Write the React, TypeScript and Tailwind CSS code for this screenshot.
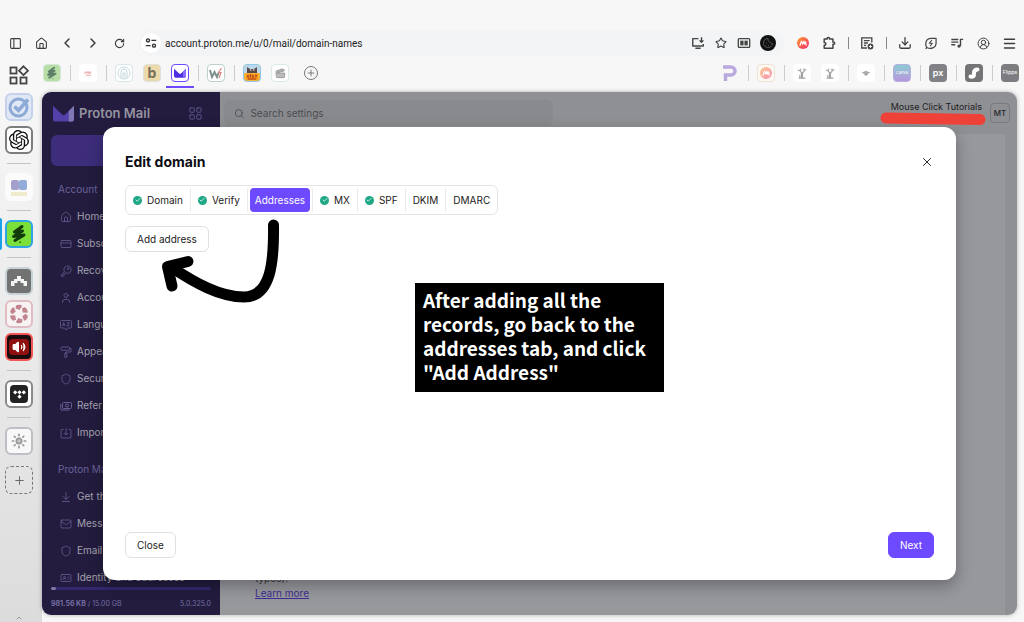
import React from 'react';
import {
  ArrowDownToLine, ArrowLeft, Check, ChevronLeft, ChevronRight, ChevronUp, CircleUserRound, Clapperboard, CreditCard,
  Download, House, IdCard, LayoutGrid, Mail, Menu, PanelLeft, Plus, RotateCw, Search, Shield, Star, Sun, User, Volume2, X,
} from 'lucide-react';
import { SiOpenai, SiTidal } from 'react-icons/si';

type NavItem = {
  label: string;
  icon: React.ReactNode;
};

type Tab = {
  label: string;
  done?: boolean;
  active?: boolean;
};

const line = { size: 12, strokeWidth: 1.6 };

const accountItems: NavItem[] = [
  { label: 'Home', icon: <House {...line} /> },
  { label: 'Subscription', icon: <CreditCard {...line} /> },
  { label: 'Recovery', icon: <KeyIcon /> },
  { label: 'Account and password', icon: <User {...line} /> },
  { label: 'Language and time', icon: <LanguageIcon /> },
  { label: 'Appearance', icon: <RollerIcon /> },
  { label: 'Security and privacy', icon: <Shield {...line} /> },
  { label: 'Refer a friend', icon: <MoneyIcon /> },
  { label: 'Import via Easy Switch', icon: <ImportIcon /> },
];

const mailItems: NavItem[] = [
  { label: 'Get the apps', icon: <ArrowDownToLine {...line} /> },
  { label: 'Messages and composing', icon: <Mail {...line} /> },
  { label: 'Email privacy', icon: <Shield {...line} /> },
  { label: 'Identity and addresses', icon: <IdCard {...line} /> },
];

const tabs: Tab[] = [
  { label: 'Domain', done: true },
  { label: 'Verify', done: true },
  { label: 'Addresses', active: true },
  { label: 'MX', done: true },
  { label: 'SPF', done: true },
  { label: 'DKIM' },
  { label: 'DMARC' },
];

function KeyIcon() {
  return (
    <svg viewBox="0 0 24 24" className="h-3 w-3" fill="none" stroke="currentColor" strokeWidth="1.6" strokeLinejoin="round">
      <path d="M9 13.500 2.500 20v2.500H6.500v-3h3V17l1.500-1.500a7.300 7.300 0 1 0-2-2Z" />
      <circle cx="16.500" cy="7.500" r="1.500" />
    </svg>
  );
}

function LanguageIcon() {
  return (
    <svg viewBox="0 0 24 24" className="h-3 w-3" fill="none" stroke="currentColor" strokeWidth="1.6" strokeLinejoin="round">
      <path d="M3 3h18a2 2 0 0 1 2 2v11a2 2 0 0 1-2 2h-6l-3 4-3-4H3a2 2 0 0 1-2-2V5a2 2 0 0 1 2-2Z" />
      <path d="M5 14l2.500-7L10 14M6 12h3M13.500 7.500H19l-5.500 6H19" />
    </svg>
  );
}

function RollerIcon() {
  return (
    <svg viewBox="0 0 24 24" className="h-3 w-3" fill="none" stroke="currentColor" strokeWidth="1.6" strokeLinejoin="round">
      <rect x="2" y="2" width="17" height="6.500" rx="1.500" />
      <path d="M19 5h3v7H11.500v3M9.500 15h4v7.500h-4Z" />
    </svg>
  );
}

function MoneyIcon() {
  return (
    <svg viewBox="0 0 24 24" className="h-3 w-3" fill="none" stroke="currentColor" strokeWidth="2" strokeLinejoin="round">
      <rect x="5" y="5" width="18" height="12" rx="2" />
      <circle cx="14" cy="11" r="3" />
      <path d="M1.500 8v10a2 2 0 0 0 2 2H19" />
    </svg>
  );
}

function ImportIcon() {
  return (
    <svg viewBox="0 0 24 24" className="h-3 w-3" fill="none" stroke="currentColor" strokeWidth="1.6" strokeLinejoin="round">
      <path d="M7 5H4a2 2 0 0 0-2 2v13a2 2 0 0 0 2 2h16a2 2 0 0 0 2-2V7a2 2 0 0 0-2-2h-3M12 2v14M8 12l4 4 4-4" />
    </svg>
  );
}

function SiteIcon() {
  return (
    <svg viewBox="0 0 16 16" className="h-3 w-3" fill="none" stroke="#333" strokeWidth="1.8">
      <circle cx="4" cy="4.500" r="2" />
      <path d="M8.500 4.500H15M1 11.500h6.500" />
      <circle cx="12" cy="11.500" r="2" />
    </svg>
  );
}

function BoardIcon() {
  return (
    <svg viewBox="0 0 20 20" className="h-5 w-5" fill="none" stroke="#444" strokeWidth="1.8">
      <rect x="1.500" y="2.500" width="6" height="6" />
      <path d="M14.500 1.300 19 5.700l-4.500 4.400L10 5.700Z" />
      <rect x="1.500" y="12.500" width="6" height="6" />
      <rect x="11.500" y="12.500" width="6" height="6" />
    </svg>
  );
}

function InstallIcon() {
  return (
    <svg viewBox="0 0 16 16" className="h-3.5 w-3.5" fill="none" stroke="#444" strokeWidth="1.6" strokeLinejoin="round">
      <path d="M8.500 3H2v8.500h12V9M5 14h6" />
      <path d="M12 1.500v5.500M9.800 5 12 7.200 14.200 5" />
    </svg>
  );
}

function PuzzleIcon() {
  return (
    <svg viewBox="0 0 16 16" className="h-3.5 w-3.5" fill="none" stroke="#444" strokeWidth="1.7" strokeLinejoin="round">
      <path d="M2.500 3.500H6C5.300 1 9.200 1 8.500 3.500h4V7c2.600-.6 2.600 3.100 0 2.500v4.500h-10v-3.500c2.500.3 2.500-3.300 0-3Z" />
    </svg>
  );
}

function QueueIcon() {
  return (
    <svg viewBox="0 0 16 16" className="h-3.5 w-3.5" fill="none" stroke="#444" strokeWidth="1.6">
      <path d="M1.500 4h8M1.500 7h8M1.500 10h4.500M12 11.500V3.800h3" />
      <circle cx="10.300" cy="11.500" r="1.900" fill="#444" stroke="none" />
    </svg>
  );
}

function ReaderIcon() {
  return (
    <svg viewBox="0 0 16 16" className="h-3.5 w-3.5">
      <rect x="1.500" y="3" width="13" height="10" rx="1" fill="none" stroke="#444" strokeWidth="1.500" />
      <rect x="3.700" y="5.300" width="3.800" height="5.400" fill="#444" />
      <rect x="8.500" y="5.300" width="3.800" height="5.400" fill="#444" />
    </svg>
  );
}

function NoteIcon() {
  return (
    <svg viewBox="0 0 16 16" className="h-3.5 w-3.5" fill="none" stroke="#444" strokeWidth="1.500">
      <path d="M13.500 7.500V2.200H2v11.500h6M4.500 5.200h6.500M4.500 8h4.500M4.500 10.800h2.500" />
      <circle cx="12" cy="12" r="3.300" fill="#444" stroke="none" />
      <path d="M12 10.200v3.600M10.200 12h3.600" stroke="#fff" strokeWidth="1" />
    </svg>
  );
}

function EnergyIcon() {
  return (
    <svg viewBox="0 0 16 16" className="h-3.5 w-3.5" fill="none" stroke="#444" strokeWidth="1.400" strokeLinejoin="round">
      <path d="M3.300 13.200C.5 9 2.200 2.600 8 2.600h5.800V8c0 5.800-6.400 7.500-10.500 5.200Zm0 0L1.800 14.500" />
      <path d="M9 4.800 6 8.300h3.500L7 11.500" strokeWidth="1.200" />
    </svg>
  );
}

function CookieIcon() {
  return (
    <svg viewBox="0 0 16 16" className="h-4 w-4">
      <circle cx="8" cy="8" r="8" fill="#111" />
      <path d="M8 3.500a4.500 4.500 0 1 0 4.500 5c-1.200.3-2-.3-2-1.400-1.500.2-2.800-1.400-2.500-3.600Z" fill="none" stroke="#555" />
      <path d="M6 8h.6M8 10.500h.6M5.800 10.500h.4" stroke="#777" />
    </svg>
  );
}

function PeakIcon({ className }: { className: string }) {
  return (
    <svg viewBox="0 0 16 16" className={className}>
      <circle cx="8" cy="8" r="8" fill="url(#peak)" />
      <path d="m4 11 2-5.500 1.600 4L9.200 5.500l1 4 1.200-3 .8 4.500" fill="none" stroke="#fff" strokeWidth="1.600" strokeLinejoin="round" strokeLinecap="round" />
      <defs>
        <linearGradient id="peak" x1="0" y1="0" x2="1" y2="1">
          <stop offset="0" stopColor="#ff9d2e" />
          <stop offset="1" stopColor="#f5276f" />
        </linearGradient>
      </defs>
    </svg>
  );
}

function ScribbleIcon({ className }: { className: string }) {
  return (
    <svg viewBox="0 0 20 20" className={className} fill="none" stroke="currentColor" strokeWidth="3" strokeLinecap="round" strokeLinejoin="round">
      <path d="M13 2.500 5.500 8l8-1-9 5.500 10.500-1.500-9 5.500" />
      <path d="M11 18.200h.2" strokeWidth="1.500" />
    </svg>
  );
}

function MailLogo({ className, light = '#a79bea', deep = '#5b43c4' }: { className: string; light?: string; deep?: string }) {
  return (
    <svg viewBox="0 0 22 17" className={className}>
      <path d="M0 0.500 9.500 9.500a2.500 2.500 0 0 0 3.300 0L22 .5V14a3 3 0 0 1-3 3H3a3 3 0 0 1-3-3Z" fill={deep} />
      <path d="M16.500 6 22 .5V14a3 3 0 0 1-3 3h-2.500Z" fill={light} />
    </svg>
  );
}

function PlantIcon() {
  return (
    <svg viewBox="0 0 14 14" className="h-3 w-3" fill="none" stroke="#a2a2a2" strokeWidth="1.300">
      <path d="M7 13V7L4 4M7 8l3-4M4.500 13V9M4 4 2 3.500M10 4l2-1M5 2l1 2M9.500 1.500 9 4M3 13h8" />
      <path d="M7 13V7" strokeWidth="2.500" />
    </svg>
  );
}

function ApertureIcon() {
  return (
    <svg viewBox="0 0 20 20" className="h-5 w-5" fill="#c1858f">
      {[0, 60, 120, 180, 240, 300].map((angle) => (
        <path key={angle} d="M7 1.500c2.500-1.300 5-.8 6.200.5L10.500 6 6.500 4.500Z" transform={`rotate(${angle} 10 10)`} />
      ))}
    </svg>
  );
}

function ToolButton({ label, children }: { label: string; children: React.ReactNode }) {
  return (
    <button aria-label={label} className="flex h-[26px] w-[26px] shrink-0 items-center justify-center text-[#3d3d3d]">
      {children}
    </button>
  );
}

function ToolDivider() {
  return (
    <div className="flex w-3 shrink-0 justify-center">
      <div className="h-3 w-px bg-[#888]" />
    </div>
  );
}

function TabDivider() {
  return (
    <div className="flex h-[26px] w-2 shrink-0 items-center justify-center">
      <div className="h-4 w-px bg-[#ccc]" />
    </div>
  );
}

function Pinned({ label, tile, active, children }: { label: string; tile: string; active?: boolean; children?: React.ReactNode }) {
  return (
    <button aria-label={label} className={`flex h-[28px] w-7 shrink-0 justify-center border-b-2 pt-1 ${active ? 'border-[#6d4aff]' : 'border-transparent'}`}>
      <span className={`flex h-[18px] w-[18px] items-center justify-center overflow-hidden rounded ${tile}`}>{children}</span>
    </button>
  );
}

function RailTile({ label, tile, children }: { label: string; tile: string; children?: React.ReactNode }) {
  return (
    <button aria-label={label} className={`flex h-7 w-7 shrink-0 items-center justify-center rounded-md border-2 ${tile}`}>
      {children}
    </button>
  );
}

function RailDivider() {
  return <div className="my-1 h-px w-6 shrink-0 bg-[#c4c4c4]" />;
}

function BrowserBar() {
  return (
    <div className="flex items-center px-0.5">
      <div className="flex w-[137px]">
        <ToolButton label="Panel"><PanelLeft size={13} strokeWidth={2} /></ToolButton>
        <ToolButton label="Home"><House size={13} strokeWidth={2} /></ToolButton>
        <ToolButton label="Back"><ChevronLeft size={16} strokeWidth={2.2} /></ToolButton>
        <ToolButton label="Forward"><ChevronRight size={16} strokeWidth={2.2} /></ToolButton>
        <ToolButton label="Reload"><RotateCw size={11} strokeWidth={2.4} /></ToolButton>
      </div>
      <div className="flex h-[26px] min-w-0 flex-1 items-center rounded-full bg-[#f2f4f5] pl-0.5">
        <span className="flex h-5 w-5 shrink-0 items-center justify-center rounded-full bg-white"><SiteIcon /></span>
        <input
          aria-label="Address"
          defaultValue="account.proton.me/u/0/mail/domain-names"
          className="min-w-0 flex-1 bg-transparent pl-1 font-['Roboto',sans-serif] text-[10px] text-[#222] outline-none"
        />
        <div className="flex gap-[9px] pr-2 text-[#3d3d3d]">
          <button aria-label="Install" className="flex w-3.5 items-center"><InstallIcon /></button>
          <button aria-label="Bookmark" className="flex w-3.5 items-center justify-center"><Star size={12} strokeWidth={2.2} /></button>
          <button aria-label="Reader" className="flex w-3.5 items-center"><ReaderIcon /></button>
          <button aria-label="Cookies" className="flex w-4 items-center"><CookieIcon /></button>
        </div>
      </div>
      <div className="ml-1.5 flex items-center">
        <ToolButton label="Monitor"><PeakIcon className="h-3 w-3" /></ToolButton>
        <ToolButton label="Extensions"><PuzzleIcon /></ToolButton>
        <ToolDivider />
        <ToolButton label="Notes"><NoteIcon /></ToolButton>
        <ToolDivider />
        <ToolButton label="Downloads"><Download size={14} strokeWidth={2.2} /></ToolButton>
        <ToolButton label="Energy saver"><EnergyIcon /></ToolButton>
        <ToolButton label="Media"><QueueIcon /></ToolButton>
        <ToolButton label="Profile"><CircleUserRound size={13} strokeWidth={1.8} /></ToolButton>
        <ToolButton label="Menu"><Menu size={15} strokeWidth={2.4} /></ToolButton>
      </div>
    </div>
  );
}

function PinnedTabs() {
  return (
    <div className="flex items-start">
      <button aria-label="Boards" className="flex h-[30px] w-[38px] items-center justify-center"><BoardIcon /></button>
      <Pinned label="Scribe" tile="border border-[#d5e8d8] bg-[#b9dda6] text-[#5f8068]"><ScribbleIcon className="h-3.5 w-3.5" /></Pinned>
      <TabDivider />
      <Pinned label="Notes" tile="bg-white">
        <svg viewBox="0 0 12 8" className="h-1.5 w-2.5" fill="none" stroke="#e4a19a" strokeWidth="1.2"><path d="m1 5 2-3 1 3 2-3 1 3 2-3 1 3M3 7h7" /></svg>
      </Pinned>
      <TabDivider />
      <Pinned label="Arch" tile="border border-[#d8e7ea] bg-white">
        <svg viewBox="0 0 14 14" className="h-3.5 w-3.5" fill="none" stroke="#c5d8dd" strokeWidth="1"><circle cx="7" cy="7" r="6" /><path d="M4 12V6a3 3 0 0 1 6 0v6M6 12V7h2v5" /></svg>
      </Pinned>
      <Pinned label="Bolt" tile="border border-[#dfe2da] bg-[#ecd9ac] text-sm font-bold text-[#777058]">b</Pinned>
      <Pinned label="Proton Mail" active tile="border border-[#6d4aff] bg-white"><MailLogo className="h-2.5 w-3" light="#8b6cff" deep="#4f2fe0" /></Pinned>
      <TabDivider />
      <Pinned label="Webflow" tile="border border-[#bed0cd] bg-white">
        <svg viewBox="0 0 14 12" className="h-3 w-3.5" fill="none" strokeWidth="2"><path d="m1 3 2 7 2.500-5L8 10l1.500-4" stroke="#7e9290" /><path d="m12.500 1-3 4.500H12L10 11" stroke="#e08585" strokeWidth="1.2" /></svg>
      </Pinned>
      <TabDivider />
      <Pinned label="Game" tile="border border-[#8fc6ee] bg-[#f6b23a]">
        <svg viewBox="0 0 16 16" className="h-4 w-4">
          <path d="M0 0h16v8H0Z" fill="#bcd9ec" />
          <path d="M3 2l3 2h4l3-2v6H3Z" fill="#5a4a45" />
          <path d="M6 5h1.500M9 5h1.500" stroke="#fff" />
          <path d="M2 9h12v6H2Z" fill="#f59b1c" />
          <path d="M4 10v3M6.500 9.500v3M9 10v3M12 9.500v3M4 14h8" stroke="#a5331d" strokeWidth="1.200" />
        </svg>
      </Pinned>
      <Pinned label="Clips" tile="border border-[#dceaea] bg-white text-[#999]"><Clapperboard size={11} fill="#bbb" /></Pinned>
      <button aria-label="New tab" className="flex h-[26px] w-8 items-center justify-center pl-0.5">
        <span className="flex h-3.5 w-3.5 items-center justify-center rounded-full border border-[#777] text-[#666]"><Plus size={10} strokeWidth={2} /></span>
      </button>
      <div className="ml-auto flex">
        <Pinned label="Pandora" tile="">
          <svg viewBox="0 0 16 18" className="h-[18px] w-4" fill="none" stroke="#b9a9df" strokeWidth="3.500"><path d="M1 3h8a4 4 0 0 1 0 8H3.500v6" /></svg>
        </Pinned>
        <TabDivider />
        <Pinned label="Monitor" tile="border border-[#eee3d2] bg-[#fbf8f4]"><PeakIcon className="h-3 w-3 opacity-50" /></Pinned>
        <TabDivider />
        <Pinned label="Plant" tile="bg-white"><PlantIcon /></Pinned>
        <Pinned label="Plant copy" tile="bg-white"><PlantIcon /></Pinned>
        <TabDivider />
        <Pinned label="Stack" tile="bg-white">
          <svg viewBox="0 0 14 8" className="h-1.5 w-3" fill="#aaa"><path d="M1 3.500 7 1l6 2.500L7 6Z" /><path d="M4 5.500h6L7 7.500Z" fill="#888" /></svg>
        </Pinned>
        <TabDivider />
        <Pinned label="Canva" tile="border border-[#b7aee0] bg-linear-to-b from-[#88cbd1] to-[#b596dc] text-[4px] text-white">Canva</Pinned>
        <TabDivider />
        <Pinned label="Pixels" tile="bg-[#828286] text-[9px] font-semibold text-white">px</Pinned>
        <TabDivider />
        <Pinned label="Sound" tile="bg-[#747476]">
          <svg viewBox="0 0 16 16" className="h-4 w-4" fill="none" stroke="#fff" strokeWidth="4" strokeLinecap="round"><path d="M4.500 11.500c4 1 3.500-1.500 3.500-3.500s1-3.500 3.500-3.500" /></svg>
        </Pinned>
        <TabDivider />
        <Pinned label="Flippa" tile="bg-[#7d7d81] text-[5px] text-white">Flippa</Pinned>
      </div>
    </div>
  );
}

function Rail() {
  return (
    <aside className="flex w-[42px] shrink-0 flex-col items-center gap-[5px] bg-linear-to-b from-[#f7f7f7] to-[#dcdcdc] pt-[3px] pr-1">
      <RailTile label="Tasks" tile="border-[#c3d2ea] bg-[#dfe8f4]">
        <svg viewBox="0 0 24 24" className="h-6 w-6" fill="none" stroke="#8da9d6">
          <circle cx="11.500" cy="12.500" r="8.500" strokeWidth="3" />
          <path d="m7.500 11.500 4 4 9.500-11" strokeWidth="3.500" />
        </svg>
      </RailTile>
      <RailTile label="ChatGPT" tile="border-[#7d7d7d] bg-white"><SiOpenai size={20} color="#111" /></RailTile>
      <RailDivider />
      <RailTile label="Meet" tile="border-transparent bg-[#fbfbfb]">
        <svg viewBox="0 0 20 20" className="h-5 w-5"><rect x="2" y="3" width="8" height="10" rx="2" fill="#a3a0cc" /><rect x="10" y="3" width="8" height="10" rx="2" fill="#92abd8" /><path d="M2 17h16" stroke="#efebcd" strokeWidth="4" /></svg>
      </RailTile>
      <RailDivider />
      <div className="relative flex">
        <span className="absolute top-[-2px] -left-[5px] h-8 w-0.5 rounded-r bg-[#1ba1e8]" />
        <RailTile label="Scribe" tile="border-[#2fa5e6] bg-[#7ce03a] text-[#123d0b]"><ScribbleIcon className="h-5 w-5" /></RailTile>
      </div>
      <RailDivider />
      <RailTile label="Bridge" tile="border-[#c6d2d6] bg-[#727272]">
        <svg viewBox="0 0 18 12" className="h-3 w-[18px]" fill="#f4f4f4"><path d="M1 11V6h3V4h3V1h4v3h3v2h3v5h-3.500V8h-3V6h-3v2h-3v3Z" /></svg>
      </RailTile>
      <RailTile label="Aperture" tile="border-[#e0bdc4] bg-[#f7f3f3]"><ApertureIcon /></RailTile>
      <RailTile label="Volume" tile="border-[#f25555] bg-[#1b0d0d] text-white">
        <span className="flex h-4 w-5 items-center justify-center rounded bg-[#8e1010]"><Volume2 size={14} fill="white" /></span>
      </RailTile>
      <RailDivider />
      <RailTile label="Tidal" tile="border-[#8a8a8a] bg-white">
        <span className="flex h-[18px] w-[18px] items-center justify-center rounded bg-[#222] text-white"><SiTidal size={13} /></span>
      </RailTile>
      <RailDivider />
      <RailTile label="Settings" tile="border-[#bcbfc3] bg-[#f8f8f8] text-[#999]"><Sun size={16} strokeWidth={2.5} fill="#c8c8c8" /></RailTile>
      <button aria-label="Add app" className="mt-1.5 flex h-7 w-7 shrink-0 items-center justify-center rounded-md border border-dashed border-[#777] text-[#666]">
        <Plus size={13} strokeWidth={1.8} />
      </button>
      <ChevronUp size={8} className="mt-auto shrink-0 text-[#777]" />
    </aside>
  );
}

function NavSection({ title, items }: { title: string; items: NavItem[] }) {
  return (
    <section className="pt-2.5 text-[10px]">
      <h2 className="flex h-[27px] items-center pl-4 text-[#6a6299]">{title}</h2>
      <ul>
        {items.map((item) => (
          <li key={item.label}>
            <a href="#" className="flex h-[27px] items-center gap-[5px] pl-[18px] whitespace-nowrap text-[#a5a2ae]">
              <span className="text-[#665e92]">{item.icon}</span>
              {item.label}
            </a>
          </li>
        ))}
      </ul>
    </section>
  );
}

function Sidebar() {
  return (
    <aside className="flex w-[178px] shrink-0 flex-col bg-[#231c3f]">
      <div className="flex h-[43px] shrink-0 items-center pr-[17px] pl-[11px]">
        <MailLogo className="h-[17px] w-[21px]" light="#8078b4" deep="#5340a8" />
        <span className="ml-[5px] text-[13px] font-semibold text-[#96939f]">Proton Mail</span>
        <button aria-label="Apps" className="ml-auto text-[#5f588c]"><LayoutGrid size={15} strokeWidth={1.5} /></button>
      </div>
      <button aria-label="Back to inbox" className="mx-[9px] flex h-[31px] shrink-0 items-center justify-center rounded-md bg-[#3d2d7b] text-[#9d9aa6]">
        <ArrowLeft size={12} />
      </button>
      <nav className="min-h-0 flex-1 overflow-hidden">
        <NavSection title="Account" items={accountItems} />
        <NavSection title="Proton Mail" items={mailItems} />
      </nav>
      <div className="shrink-0 px-[9px] pt-1 pb-[5px]">
        <div className="h-[3px] rounded-full bg-[#33286f]">
          <div className="h-full w-[5px] rounded-full bg-[#7d779f]" />
        </div>
        <div className="mt-2 flex justify-between text-[7px] leading-3 text-[#766ea3]">
          <span><b>981.56 KB</b> / 15.00 GB</span>
          <span>5.0.325.0</span>
        </div>
      </div>
    </aside>
  );
}

function Settings() {
  return (
    <div className="flex min-w-0 flex-1 flex-col bg-[#8f9094]">
      <header className="flex h-[42px] shrink-0 items-center pr-[7px] pl-1">
        <label className="flex h-[26px] w-[329px] items-center gap-1.5 rounded-md bg-[#898a8e] pl-2.5 text-[#4b4b50]">
          <Search size={11} strokeWidth={2} />
          <input aria-label="Search settings" placeholder="Search settings" className="w-full bg-transparent text-[10px] outline-none placeholder:text-[#4b4b50]" />
        </label>
        <div className="ml-auto flex items-center gap-2">
          <span className="pb-3 text-[9px] leading-3 text-[#1d1d22]">Mouse Click Tutorials</span>
          <button className="h-5 w-5 rounded border border-[#77787c] text-[8px] font-medium text-[#26262b]">MT</button>
        </div>
      </header>
      <div className="mr-3 flex flex-1 flex-col justify-end bg-[#97989c] px-[35px] pb-3.5 text-[10px] leading-[15px]">
        <p className="text-[#3a3a40]">typos).</p>
        <a href="#" className="self-start text-[#3d2c92] underline">Learn more</a>
      </div>
    </div>
  );
}

function EditDomain() {
  return (
    <div role="dialog" aria-labelledby="edit-domain" className="relative flex h-full w-full flex-col rounded-xl bg-white p-[22px] text-[10px] text-[#1b1b20] shadow-[0_6px_16px_rgba(0,0,0,0.3)]">
      <div className="flex h-[26px] items-center justify-between">
        <h1 id="edit-domain" className="text-sm font-bold text-[#0c0c14]">Edit domain</h1>
        <button aria-label="Close dialog"><X size={14} strokeWidth={1.6} /></button>
      </div>
      <div role="tablist" className="mt-2.5 flex h-[30px] self-start rounded-md border border-[#e3e3e6] py-0.5">
        {tabs.map((tab) => (
          <button
            key={tab.label}
            role="tab"
            aria-selected={!!tab.active}
            className="flex items-center border-r border-[#ebebed] px-[2px] last:border-r-0"
          >
            <span className={`flex h-full items-center gap-[5px] px-[5px] ${tab.active ? 'rounded-sm bg-[#6d4aff] text-white' : ''}`}>
              {tab.done && (
                <span className="flex h-[9px] w-[9px] items-center justify-center rounded-full bg-[#1ea885] text-white">
                  <Check size={6} strokeWidth={3} />
                </span>
              )}
              {tab.label}
            </span>
          </button>
        ))}
      </div>
      <button className="mt-[11px] h-[26px] self-start rounded-md border border-[#e0e0e3] px-[11px]">Add address</button>
      <div className="mt-auto flex justify-between">
        <button className="h-[26px] rounded-md border border-[#e0e0e3] px-[11px]">Close</button>
        <button className="h-[26px] rounded-md border border-[#6d4aff] bg-[#6d4aff] px-[11px] text-white">Next</button>
      </div>

      {/* hand drawn arrow from the active tab to the button */}
      <svg viewBox="0 0 130 90" className="pointer-events-none absolute top-[90px] left-[55px] h-[90px] w-[130px]" fill="none" stroke="#000" strokeWidth="11" strokeLinecap="round" strokeLinejoin="round">
        <path d="M115.500 8C116 45 113 80 86 80C62 80 37 66 13 50" />
        <path d="M30 44.500 9.500 49.500 14 69" />
      </svg>
      <p className="absolute top-[156px] left-[312px] w-[249px] bg-black px-2 pt-[5px] pb-2 font-['Noto_Sans_CJK_JP',sans-serif] text-[19px] leading-6 font-bold text-white">
        After adding all the records, go back to the addresses tab, and click &quot;Add Address&quot;
      </p>
    </div>
  );
}

export default function App() {
  return (
    <div className="flex h-screen flex-col bg-[#f7f7f7] pt-[30px] font-[Inter,sans-serif]">
      <BrowserBar />
      <div className="pt-1">
        <PinnedTabs />
      </div>
      <div className="flex min-h-0 flex-1">
        <Rail />
        <main className="relative mt-0.5 mr-[7px] mb-[7px] flex min-w-0 flex-1 rounded-[9px] shadow-[0_0_4px_rgba(0,0,0,0.3)]">
          <div className="flex min-w-0 flex-1 overflow-hidden rounded-[9px]">
            <Sidebar />
            <Settings />
          </div>
          <div className="absolute inset-0 px-[61px] py-[35px]">
            <EditDomain />
          </div>
          {/* marker stroke under the account name */}
          <svg viewBox="0 0 106 14" className="absolute top-5 right-[31px] h-3.5 w-[106px]" stroke="#ee4137" strokeWidth="11" strokeLinecap="round">
            <path d="M6 6 100 7.500" />
          </svg>
        </main>
      </div>
    </div>
  );
}
